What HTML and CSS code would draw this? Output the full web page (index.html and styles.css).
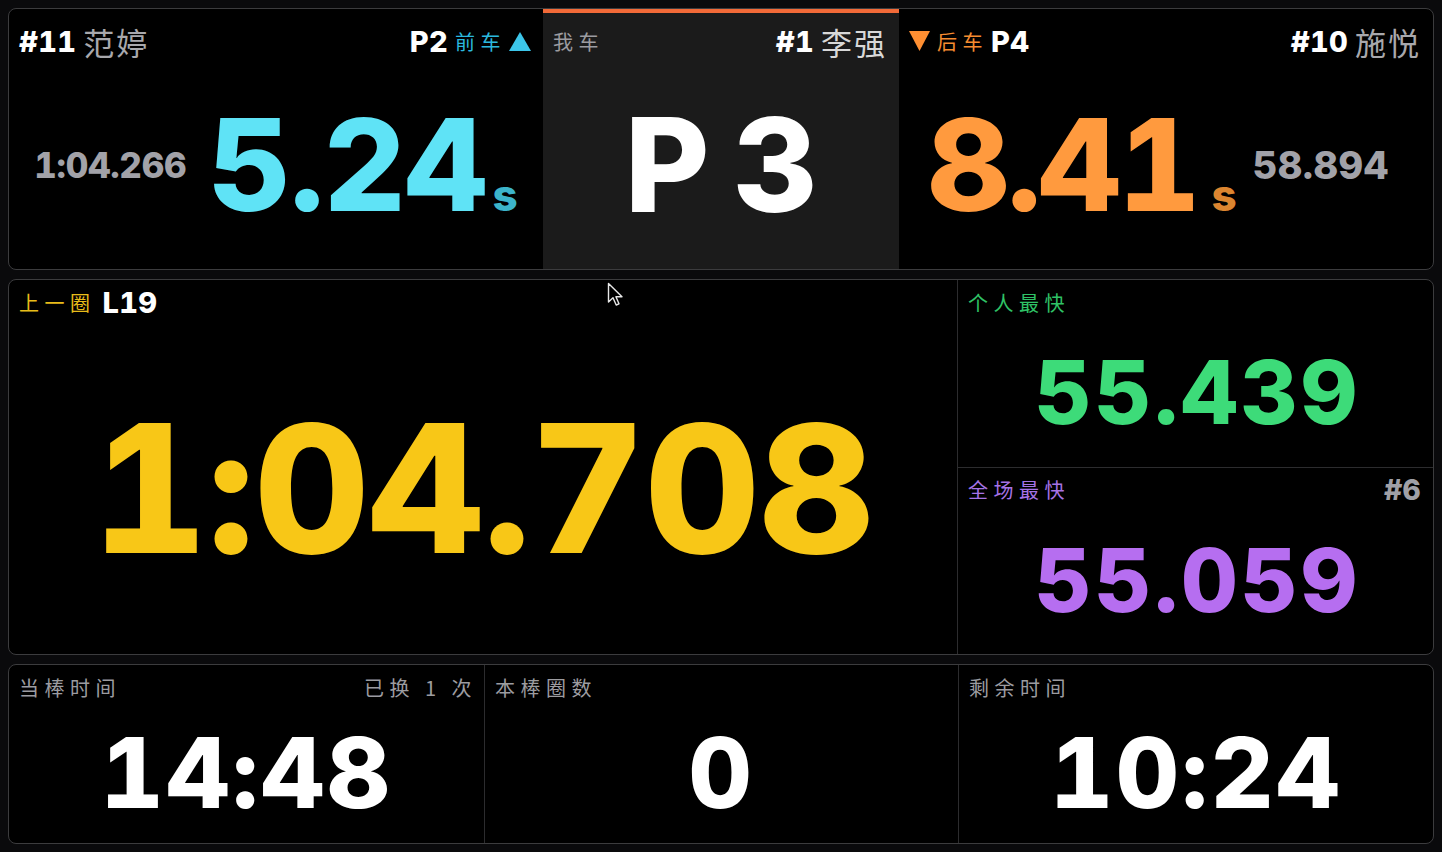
FILE: index.html
```html
<!DOCTYPE html>
<html lang="zh-CN">
<head>
<meta charset="utf-8">
<title>Race Dashboard</title>
<link rel="stylesheet" href="styles.css">
</head>
<body>
<div class="board">
  <div class="panel top">
    <div class="sec ahead">
      <div class="head">
        <div class="who"><span class="num">#11</span><span class="name">范婷</span></div>
        <div class="rel"><span class="pos">P2</span><span class="tag cyan">前车</span>
          <svg class="tri" width="22" height="19" viewBox="0 0 22 19"><polygon points="11,0 22,19 0,19" fill="#3cc6ea"/></svg>
        </div>
      </div>
      <div class="body row">
        <span class="lap">1:04.266</span>
        <span class="gap cyanbig">5.24<span class="unit cyanunit">s</span></span>
      </div>
    </div>
    <div class="sec mine">
      <div class="head">
        <span class="tag gray">我车</span>
        <div class="who"><span class="num">#1</span><span class="name light">李强</span></div>
      </div>
      <div class="body center">
        <span class="place">P<span class="sp"></span>3</span>
      </div>
    </div>
    <div class="sec behind">
      <div class="head">
        <div class="rel">
          <svg class="tri down" width="21" height="20" viewBox="0 0 21 20"><polygon points="0,0 21,0 10.5,20" fill="#ff8f32"/></svg>
          <span class="tag orange">后车</span><span class="pos">P4</span>
        </div>
        <div class="who"><span class="num">#10</span><span class="name">施悦</span></div>
      </div>
      <div class="body row right">
        <span class="gap orangebig">8.41<span class="unit orangeunit">s</span></span>
        <span class="lap big">58.894</span>
      </div>
    </div>
  </div>

  <div class="panel mid">
    <div class="sec last">
      <div class="head small">
        <div class="who"><span class="tag yellow">上一圈</span><span class="lapno">L19</span></div>
      </div>
      <div class="body center"><span class="laptime">1:04.708</span></div>
    </div>
    <div class="sec bests">
      <div class="sub pb">
        <div class="head small"><span class="tag green">个人最快</span></div>
        <div class="body center"><span class="best greenbig">55.439</span></div>
      </div>
      <div class="sub ob">
        <div class="head small"><span class="tag purple">全场最快</span><span class="car">#6</span></div>
        <div class="body center"><span class="best purplebig">55.059</span></div>
      </div>
    </div>
  </div>

  <div class="panel bottom">
    <div class="sec stint">
      <div class="head small"><span class="tag gray">当棒时间</span><span class="tag gray">已换 1 次</span></div>
      <div class="body center"><span class="clock">14:48</span></div>
    </div>
    <div class="sec laps">
      <div class="head small"><span class="tag gray">本棒圈数</span></div>
      <div class="body center"><span class="clock">0</span></div>
    </div>
    <div class="sec remain">
      <div class="head small"><span class="tag gray">剩余时间</span></div>
      <div class="body center"><span class="clock">10:24</span></div>
    </div>
  </div>
</div>
<svg class="cursor" width="18" height="26" viewBox="0 0 18 26"><path d="M1.5 1.5 L1.5 20 L6 15.8 L9.2 23 L12 21.8 L8.9 14.8 L15 14.8 Z" fill="#000" stroke="#e8e8e8" stroke-width="1.4" stroke-linejoin="round"/></svg>
</body>
</html>
```

FILE: styles.css
```css
html, body {
  margin: 0;
  background: #0a0a0c;
}
body {
  font-family: Inter, "Noto Sans CJK SC", sans-serif;
  font-feature-settings: "tnum" 1;
  color: #fff;
  position: relative;
}
.board {
  box-sizing: border-box;
  height: 852px;
  padding: 8px;
  display: flex;
  flex-direction: column;
  gap: 9px;
}
.panel {
  display: flex;
  background: #000;
  border: 1px solid #3c3c3e;
  border-radius: 8px;
  overflow: hidden;
  box-sizing: border-box;
}
.top { height: 262px; }
.mid { height: 376px; }
.bottom { height: 180px; }

.sec {
  display: flex;
  flex-direction: column;
  box-sizing: border-box;
}
.ahead { width: 534px; }
.mine { width: 356px; background: #1b1b1b; border-top: 4px solid #f26a38; }
.behind { flex: 1; }

.head {
  display: flex;
  justify-content: space-between;
  align-items: center;
  padding: 12px 12px 0 10px;
  height: 40px;
}
.mine .head { padding-top: 8px; }
.head.small {
  padding: 6px 12px 0 10px;
  height: 32px;
}
.who, .rel {
  display: flex;
  align-items: center;
  gap: 7px;
}
.num, .pos, .lapno, .car {
  font-family: Inter, sans-serif;
  font-weight: 800;
  font-size: 29px;
  letter-spacing: 0.3px;
}
.name {
  font-family: "Noto Sans CJK SC", sans-serif;
  font-size: 31px;
  color: #a8a8ac;
  font-weight: 400;
  letter-spacing: 2px;
}
.name.light { color: #d8d8d8; }
.tag {
  font-family: "Noto Sans CJK SC", sans-serif;
  font-size: 20px;
  letter-spacing: 5.5px;
}
.tag:last-child { margin-right: -5px; }
.gray { color: #9c9ca0; }
.cyan { color: #2bb8de; }
.orange { color: #f58c30; }
.yellow { color: #e8bd1a; }
.green { color: #2fc266; }
.purple { color: #a673e6; }
.car { color: #a0a0a6; font-size: 28px; }
.tri { display: block; }
.rel .tag + .tri { margin-left: -4px; }
.rel .tag + .pos { margin-left: -4px; }
.lapno { margin-left: 0; }

.body {
  flex: 1;
  display: flex;
  align-items: center;
}
.body.center { justify-content: center; }
.body.row { justify-content: center; gap: 22px; }
.body.row.right { gap: 16px; padding-right: 16px; }

.lap {
  font-weight: 800;
  font-size: 35px;
  color: #a2a2a8;
  letter-spacing: -0.3px;
}
.lap.big { font-size: 38px; letter-spacing: 0.5px; }
.gap {
  font-weight: 800;
  font-size: 128px;
  letter-spacing: -1px;
  line-height: 1;
}
.unit {
  font-size: 44px;
  margin-left: 6px;
  letter-spacing: 0;
}
.cyanbig { color: #5fe3f6; }
.cyanunit { color: #3cb4ca; }
.orangebig { color: #ff9a3e; letter-spacing: -3px; }
.orangeunit { color: #dc8530; margin-left: 14px; }
.place {
  font-weight: 800;
  font-size: 130px;
  line-height: 1;
  color: #fff;
  display: flex;
  align-items: baseline;
}
.sp { display: inline-block; width: 24px; }

.last { flex: 1; }
.bests { width: 476px; border-left: 1px solid #2c2c2e; }
.sub { flex: 1; display: flex; flex-direction: column; }
.pb { border-bottom: 1px solid #2c2c2e; }
.laptime {
  font-weight: 800;
  font-size: 178px;
  letter-spacing: -0.5px;
  line-height: 1;
  color: #f8c717;
  margin-top: 6px;
}
.best {
  font-weight: 800;
  font-size: 88px;
  letter-spacing: 3px;
  line-height: 1;
}
.greenbig { color: #3ddb79; margin-left: 4px; }
.purplebig { color: #b66ef0; margin-left: 4px; }

.stint { width: 476px; border-right: 1px solid #2c2c2e; }
.laps { width: 474px; border-right: 1px solid #2c2c2e; }
.remain { flex: 1; }
.clock {
  font-weight: 800;
  font-size: 98px;
  letter-spacing: 2.5px;
  line-height: 1;
  color: #fff;
}

.cursor {
  position: absolute;
  left: 607px;
  top: 282px;
}
```
